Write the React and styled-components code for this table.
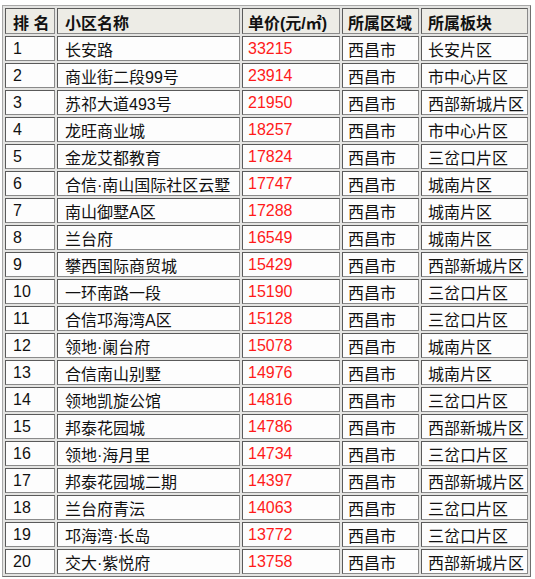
import React from 'react'
import styled, { createGlobalStyle } from 'styled-components';

const Global = createGlobalStyle`
body{
margin:0;
background:#ffffff;
}
`;

const Page = styled.div`
padding:5px 0 0 2px;
`;

const Table = styled.div`
display:grid;
grid-template-columns:50px 183px 98px 77px 107px;
grid-template-rows:26px;
grid-auto-rows:25px;
gap:2px;
padding:2px;
width:529px;
box-sizing:border-box;
background:#e4e4e2;
border:1px solid;
border-color:#a8a8a8 #6f6f6f #6f6f6f #a8a8a8;
font-family:"Liberation Sans","Noto Sans CJK SC",sans-serif;
font-size:16px;
`;

const Cell = styled.div`
display:flex;
align-items:center;
box-sizing:border-box;
padding-left:${props=>props.pad||6}px;
padding-top:1px;
white-space:nowrap;
overflow:hidden;
border:1px solid;
border-color:#5a5a5a #8a8a8a #8a8a8a #5a5a5a;
background:${props=>props.head ? '#edece6' : '#fdfdfd'};
color:${props=>props.red ? '#ff1a1a' : '#111111'};
font-weight:${props=>props.head ? 'bold' : 'normal'};
`;

const rows = [
['1','长安路','33215','西昌市','长安片区'],
['2','商业街二段99号','23914','西昌市','市中心片区'],
['3','苏祁大道493号','21950','西昌市','西部新城片区'],
['4','龙旺商业城','18257','西昌市','市中心片区'],
['5','金龙艾都教育','17824','西昌市','三岔口片区'],
['6','合信·南山国际社区云墅','17747','西昌市','城南片区'],
['7','南山御墅A区','17288','西昌市','城南片区'],
['8','兰台府','16549','西昌市','城南片区'],
['9','攀西国际商贸城','15429','西昌市','西部新城片区'],
['10','一环南路一段','15190','西昌市','三岔口片区'],
['11','合信邛海湾A区','15128','西昌市','三岔口片区'],
['12','领地·阑台府','15078','西昌市','城南片区'],
['13','合信南山别墅','14976','西昌市','城南片区'],
['14','领地凯旋公馆','14816','西昌市','三岔口片区'],
['15','邦泰花园城','14786','西昌市','西部新城片区'],
['16','领地·海月里','14734','西昌市','三岔口片区'],
['17','邦泰花园城二期','14397','西昌市','西部新城片区'],
['18','兰台府青沄','14063','西昌市','三岔口片区'],
['19','邛海湾·长岛','13772','西昌市','三岔口片区'],
['20','交大·紫悦府','13758','西昌市','西部新城片区'],
];

const heads = ['排 名','小区名称','单价(元/㎡)','所属区域','所属板块'];
const pads = [7,7,5,5,6];

const App = () => {
  return <Page>
    <Global />
    <Table>
      {heads.map((h,i)=><Cell head key={'h'+i} pad={pads[i]}>{h}</Cell>)}
      {rows.map(r=>r.map((v,i)=>
        <Cell key={r[0]+'-'+i} pad={pads[i]} red={i===2}>{v}</Cell>
      ))}
    </Table>
  </Page>
}

export default App;
